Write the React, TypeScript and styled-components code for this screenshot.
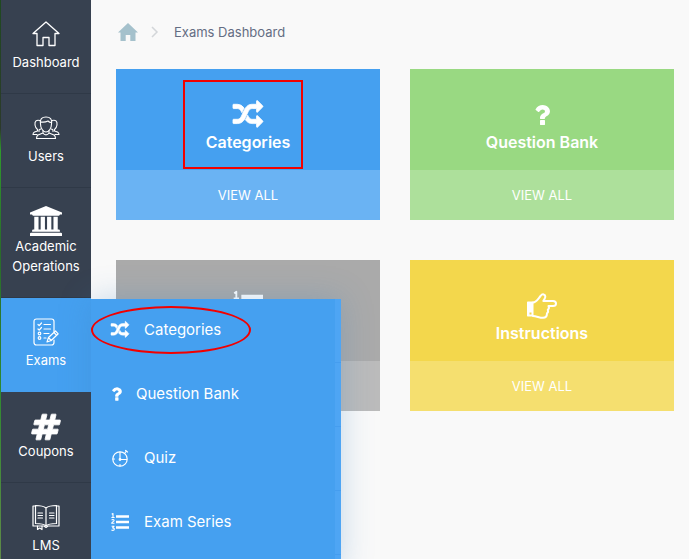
import React from "react";
import styled, { createGlobalStyle } from "styled-components";

const GlobalStyle = createGlobalStyle`
  *, *::before, *::after { box-sizing: border-box; }
  body { margin: 0; background: #f9f9f9; font-family: Inter, "Liberation Sans", sans-serif; }
  a { color: inherit; text-decoration: none; }
  ul, ol { margin: 0; padding: 0; list-style: none; }
  h2 { margin: 0; }
  svg { display: block; }
`;

const Shell = styled.div`
  display: flex;
  height: 100vh;
  overflow: hidden;
`;

const Sidebar = styled.nav`
  position: relative;
  z-index: 1;
  flex: 0 0 91px;
  padding-left: 1px;
  background: linear-gradient(#1f4a20, #2c3a2a 23%, #2f9a2c 27%, #2a6b2a 45%, #2f8a30 70%, #5f8a48);
`;

const NavItem = styled.li<{ $active?: boolean }>`
  position: relative;
  background: ${(p) => (p.$active ? "#45a0f0" : "#374150")};
  border-bottom: 1px solid ${(p) => (p.$active ? "#45a0f0" : "#2f3947")};
`;

const NavLink = styled.a<{ $pad: number; $gap: number }>`
  display: flex;
  flex-direction: column;
  align-items: center;
  gap: ${(p) => p.$gap}px;
  padding: ${(p) => p.$pad}px 0 21px;
  color: #fff;
  font-size: 13px;
  line-height: 20px;
  text-align: center;
`;

const Submenu = styled.ul`
  position: absolute;
  top: 1px;
  left: 100%;
  width: 250px;
  padding-bottom: 16px;
  color: #fff;
  background: linear-gradient(to left, #4ea5f4 6px, #45a0f0 6px);
  box-shadow: 0 0 30px rgba(60, 130, 190, 0.28);
`;

const SubItem = styled.li`
  position: relative;
  background: linear-gradient(to left, #459def 6px, transparent 6px) left bottom / 100% 1px no-repeat;
`;

const SubLink = styled.a<{ $narrow?: boolean }>`
  display: flex;
  align-items: center;
  gap: ${(p) => (p.$narrow ? 14 : 15)}px;
  height: 64px;
  padding: 0 20px 2px;
  font-size: 15px;
  line-height: 20px;
`;

const EllipseMark = styled.span`
  position: absolute;
  top: 7px;
  left: 0;
  width: 160px;
  height: 48px;
  border: 2px solid #f20000;
  border-radius: 50%;
  pointer-events: none;
`;

const Main = styled.main`
  flex: 1;
  min-width: 0;
  padding: 22px 15px 0 25px;
`;

const Crumbs = styled.ol`
  display: flex;
  align-items: center;
  height: 20px;
  margin: 0 2px 27px;
  color: #646d83;
  font-size: 13px;
  line-height: 20px;

  li + li { margin-left: 12px; }
  li:last-child { margin-left: 14px; }
`;

const Cards = styled.div`
  display: grid;
  grid-template-columns: repeat(2, minmax(0, 1fr));
  gap: 40px 30px;
`;

const Card = styled.section<{ $color: string }>`
  background: ${(p) => p.$color};
  color: #fff;
`;

const CardBody = styled.div`
  position: relative;
  display: flex;
  flex-direction: column;
  align-items: center;
  padding: 29px 0 17px;
`;

const CardIcon = styled.div`
  display: grid;
  place-items: center;
  height: 33px;
`;

const CardTitle = styled.h2`
  font-size: 16px;
  font-weight: 600;
  line-height: 22px;
`;

const ViewAll = styled.a`
  display: block;
  background: rgba(255, 255, 255, 0.2);
  font-size: 13px;
  line-height: 20px;
  padding: 15px 0;
  text-align: center;
`;

const BoxMark = styled.span`
  position: absolute;
  top: 11px;
  left: 50%;
  width: 120px;
  height: 89px;
  margin-left: -65px;
  border: 2px solid #f20000;
  pointer-events: none;
`;

const Glyph = styled.svg.attrs({ "aria-hidden": true })`
  flex: none;
  overflow: visible;
`;

const line = {
  fill: "none",
  stroke: "currentColor",
  strokeLinejoin: "round" as const,
  strokeLinecap: "round" as const,
};

function HouseIcon() {
  return (
    <Glyph width="28" height="26" viewBox="0 0 28 26" {...line} strokeWidth="1.3">
      <path d="M14 1 1 12.500h4V24.500h6v-8h6v8h6V12.500h4Z" />
    </Glyph>
  );
}

function UsersIcon() {
  return (
    <Glyph width="28" height="24" viewBox="0 0 28 24" {...line} strokeWidth="1.1">
      <path d="M8.500 8c-1-5 1.500-7 5.500-7s6.500 2 5.500 7c0 4-2.500 8-5.500 8s-5.500-4-5.500-8ZM9 6c3 .5 6-.5 7-1 1 1 2 1.500 3 1.500" />
      <path d="M11 14.500v2.500l-5 2c-1 .6-1.500 2-1.500 3.500h19c0-1.500-.5-2.900-1.500-3.500l-5-2v-2.500M11 17c1.500 2.500 4.500 2.500 6 0" />
      <path d="M8 4.500C4.500 3.500 2.500 5 3 9c.3 2 1 3.500 2.500 4.500V15l-3 1C1.300 16.500 1 17.200 1 18.500h4M8.500 13 7 14v1.500M20 4.500c3.500-1 5.500.5 5 4.500-.3 2-1 3.500-2.500 4.500V15l3 1c1.200.5 1.500 1.200 1.500 2.500h-4M19.500 13l1.500 1v1.500" />
    </Glyph>
  );
}

function BankIcon() {
  return (
    <Glyph width="32" height="30" viewBox="0 0 1920 1792" fill="currentColor">
      <path d="M960 0l960 384v128h-128q0 26-20.500 45t-48.500 19h-1526q-28 0-48.500-19t-20.500-45h-128v-128zm-704 640h256v768h128v-768h256v768h128v-768h256v768h128v-768h256v768h59q28 0 48.500 19t20.500 45v64h-1664v-64q0-26 20.500-45t48.500-19h59v-768zm1595 960q28 0 48.500 19t20.500 45v128h-1920v-128q0-26 20.500-45t48.500-19h1782z" />
    </Glyph>
  );
}

function ExamIcon() {
  return (
    <Glyph width="26" height="28" viewBox="0 0 26 28" {...line} strokeWidth="1.200">
      <path d="M21 13.500V3.500c0-1.500-.8-2.500-2.500-2.500h-15C1.800 1 1 2 1 3.500v21C1 26 1.800 27 3.500 27h15c1.700 0 2.500-1 2.500-2.500V22" />
      <path d="m5 6.500 1.200 1.200L8.500 5M5 11l1.200 1.200 2.300-2.700M11 6.500h6.500M11 11h6.500M11 15.500h5M11 20h2" />
      <circle cx="6.500" cy="15.500" r="1.300" />
      <circle cx="6.500" cy="20" r="1.300" />
      <path d="m14 24 1.500-4.500 7-6.500 2.700 2.800-7 6.700ZM15.500 19.500l2.700 3M21 14.500l2.700 2.800" />
    </Glyph>
  );
}

function HashIcon() {
  return (
    <Glyph width="30" height="28" viewBox="0 60 1792 1672" fill="currentColor" stroke="currentColor" strokeWidth="50">
      <path d="M991 1024l64-256h-254l-64 256h254zm768-504l-56 224q-7 24-31 24h-327l-64 256h311q15 0 25 12 10 14 6 28l-56 224q-5 24-31 24h-327l-81 328q-7 24-31 24h-224q-16 0-26-12-9-12-6-28l78-312h-254l-81 328q-7 24-31 24h-225q-15 0-25-12-9-12-6-28l78-312h-311q-15 0-25-12-9-12-6-28l56-224q7-24 31-24h327l64-256h-311q-15 0-25-12-10-14-6-28l56-224q5-24 31-24h327l81-328q7-24 32-24h224q15 0 25 12 9 12 6 28l-78 312h254l81-328q7-24 32-24h224q15 0 25 12 9 12 6 28l-78 312h311q15 0 25 12 9 12 6 28z" />
    </Glyph>
  );
}

function BookIcon() {
  return (
    <Glyph width="28" height="26" viewBox="0 0 28 26" {...line} strokeWidth="1.200">
      <path d="M14 4C11 1.500 7 1.500 3.500 1.500v18c4 0 8 0 10.500 2.500 2.500-2.500 6.500-2.500 10.500-2.500v-18C21 1.500 17 1.500 14 4ZM14 4v18" />
      <path d="M3.500 2H1v20h11l2 1.500 2-1.500h11V2h-2.500" />
      <path d="M5.500 22v3.500l2.200-1.500 2.300 1.500V22" />
      <path d="M6 9h4.500M6 11.500h4.500M6 14h4.500M17.500 9H22M17.500 11.500H22M17.500 14H22" />
    </Glyph>
  );
}

function ShuffleIcon({ size }: { size: number }) {
  return (
    <Glyph width={size} height={size} viewBox="0 0 1792 1792" fill="currentColor" stroke="currentColor" strokeWidth="50">
      <path d="M666 481q-60 92-137 273-22-45-37-72.500t-40.500-63.500-51-56.500-63-35-81.500-14.500h-224q-14 0-23-9t-9-23v-192q0-14 9-23t23-9h224q250 0 410 225zm1126 799q0 14-9 23l-320 320q-9 9-23 9-13 0-22.500-9.500t-9.500-22.500v-192q-32 0-85 .5t-81 1-73-1-71-5-64-10.500-63-18.500-58-28.500-59-40-55-53.500-56-69.500q59-93 136-273 22 45 37 72.500t40.500 63.500 51 56.500 63 35 81.500 14.500h256v-192q0-14 9-23t23-9q12 0 24 10l319 319q9 9 9 23zm0-896q0 14-9 23l-320 320q-9 9-23 9-13 0-22.500-9.500t-9.500-22.500v-192h-256q-48 0-87 15t-69 45-51 61.500-45 77.500q-32 62-78 171-29 66-49.500 111t-54 105-64 100-74 83-90 68.500-106.500 42-128 16.500h-224q-14 0-23-9t-9-23v-192q0-14 9-23t23-9h224q48 0 87-15t69-45 51-61.500 45-77.500q32-62 78-171 29-66 49.500-111t54-105 64-100 74-83 90-68.500 106.500-42 128-16.500h256v-192q0-14 9-23t23-9q12 0 24 10l319 319q9 9 9 23z" />
    </Glyph>
  );
}

function QuestionIcon({ width, height }: { width: number; height: number }) {
  return (
    <Glyph width={width} height={height} viewBox="384 128 1024 1536" fill="currentColor">
      <path d="M1088 1256v240q0 16-12 28t-28 12h-240q-16 0-28-12t-12-28v-240q0-16 12-28t28-12h240q16 0 28 12t12 28zm316-600q0 54-15.500 101t-35 76.500-55 59.500-57.500 43.500-61 35.500q-41 23-68.500 65t-27.500 67q0 17-12 32.500t-28 15.500h-240q-15 0-25.500-18.500t-10.500-37.500v-45q0-83 65-156.500t143-108.500q59-27 84-56t25-76q0-42-46.500-74t-107.500-32q-65 0-108 29-35 25-107 115-13 16-31 16-12 0-25-8l-164-125q-13-10-15.500-25t5.500-28q160-266 464-266 80 0 161 31t146 83 106 127.500 41 158.500z" />
    </Glyph>
  );
}

function ClockIcon() {
  return (
    <Glyph width="18" height="18" viewBox="0 0 18 18" {...line} strokeWidth="1.200">
      <circle cx="9" cy="10" r="7.200" />
      <path d="M9 3v7.500h6.500M2 10h1.500M9 15.500V17M13.500 4.500 15.500 2M14.500 1.500l2 1.500" />
      <circle cx="9" cy="10.500" r=".8" fill="currentColor" />
    </Glyph>
  );
}

function NumberedListIcon({ size }: { size: number }) {
  return (
    <Glyph width={size} height={size} viewBox="0 0 18 18" {...line} strokeLinecap="butt">
      <path d="M5 3.500h13M5 9h13M5 14.500h13" strokeWidth="2.600" />
      <path
        d="M.7 1.300 2 .5v4M.4 4.500h3.200M.7 7.200c.5-1 2.400-.8 2.400.3 0 .9-2.400 1.500-2.400 2.800h2.800M.6 13.200h2.500l-1.500 1.700c2.400 0 2 2.500.3 2.500-.6 0-1-.1-1.500-.5"
        strokeWidth="1.100"
      />
    </Glyph>
  );
}

function PointingHandIcon() {
  return (
    <Glyph width="30" height="30" viewBox="0 0 30 30" {...line} strokeWidth="2">
      <path d="M6 11.500c3 0 5-3.500 7.500-6.500 1.300-1.700 2-2 3.200-1.500 2.200.7 1.800 2.800.8 4.500L16.300 10H26c4 0 4 5 0 5h-4.500c.8 1.500.3 3-.7 3.800.5 1.300.2 2.700-.8 3.400 0 3.300-1.200 4.600-4 4.600-3.500 0-6.300-1.600-10-1.800" />
      <path fillRule="evenodd" fill="currentColor" stroke="none" d="M1 10.500h5.500v15H1c-.6 0-1-.4-1-1v-13c0-.6.4-1 1-1Zm1.500 11v2h2v-2Z" />
    </Glyph>
  );
}

function HomeCrumbIcon() {
  return (
    <Glyph width="20" height="18" viewBox="0 0 20 18" fill="#a5c1cc">
      <path d="M10 0 0 9.500h2.500V18h5.200v-6h4.600v6h5.200V9.500H20Z" />
    </Glyph>
  );
}

const navBefore = [
  { label: "Dashboard", icon: <HouseIcon />, pad: 21, gap: 5 },
  { label: "Users", icon: <UsersIcon />, pad: 22, gap: 6 },
  { label: "Academic Operations", icon: <BankIcon />, pad: 18, gap: 0 },
];

const navAfter = [
  { label: "Coupons", icon: <HashIcon />, pad: 21, gap: 0 },
  { label: "LMS", icon: <BookIcon />, pad: 21, gap: 5 },
];

const submenu = [
  { label: "Categories", icon: <ShuffleIcon size={18} />, marked: true },
  { label: "Question Bank", icon: <QuestionIcon width={11} height={16} />, narrow: true },
  { label: "Quiz", icon: <ClockIcon /> },
  { label: "Exam Series", icon: <NumberedListIcon size={18} /> },
];

const cards = [
  { title: "Categories", color: "#45a0f0", icon: <ShuffleIcon size={30} />, marked: true },
  { title: "Question Bank", color: "#99d982", icon: <QuestionIcon width={16} height={24} /> },
  { title: "Exam Series", color: "#aaaaaa", icon: <NumberedListIcon size={30} /> },
  { title: "Instructions", color: "#f3d74c", icon: <PointingHandIcon /> },
];

type Entry = (typeof navBefore)[number];

function NavEntry({ item, active, children }: { item: Entry; active?: boolean; children?: React.ReactNode }) {
  return (
    <NavItem $active={active}>
      <NavLink href="#" $pad={item.pad} $gap={item.gap} aria-current={active ? "page" : undefined}>
        {item.icon}
        {item.label}
      </NavLink>
      {children}
    </NavItem>
  );
}

export default function App() {
  return (
    <>
      <GlobalStyle />
      <Shell>
        <Sidebar>
          <ul>
            {navBefore.map((n) => (
              <NavEntry key={n.label} item={n} />
            ))}
            <NavEntry item={{ label: "Exams", icon: <ExamIcon />, pad: 20, gap: 4 }} active>
              <Submenu>
                {submenu.map((s) => (
                  <SubItem key={s.label}>
                    <SubLink href="#" $narrow={s.narrow}>
                      {s.icon}
                      {s.label}
                    </SubLink>
                    {s.marked && <EllipseMark />}
                  </SubItem>
                ))}
              </Submenu>
            </NavEntry>
            {navAfter.map((n) => (
              <NavEntry key={n.label} item={n} />
            ))}
          </ul>
        </Sidebar>
        <Main>
          <Crumbs aria-label="Breadcrumb">
            <li>
              <a href="#" aria-label="Home">
                <HomeCrumbIcon />
              </a>
            </li>
            <li aria-hidden="true">
              <Glyph width="10" height="12" viewBox="0 0 10 12" fill="none" stroke="#d3d6d9" strokeWidth="1.500">
                <path d="m2 1 5 5-5 5" />
              </Glyph>
            </li>
            <li>Exams Dashboard</li>
          </Crumbs>
          <Cards>
            {cards.map((c) => (
              <Card key={c.title} $color={c.color}>
                <CardBody>
                  <CardIcon>{c.icon}</CardIcon>
                  <CardTitle>{c.title}</CardTitle>
                  {c.marked && <BoxMark />}
                </CardBody>
                <ViewAll href="#">VIEW ALL</ViewAll>
              </Card>
            ))}
          </Cards>
        </Main>
      </Shell>
    </>
  );
}
